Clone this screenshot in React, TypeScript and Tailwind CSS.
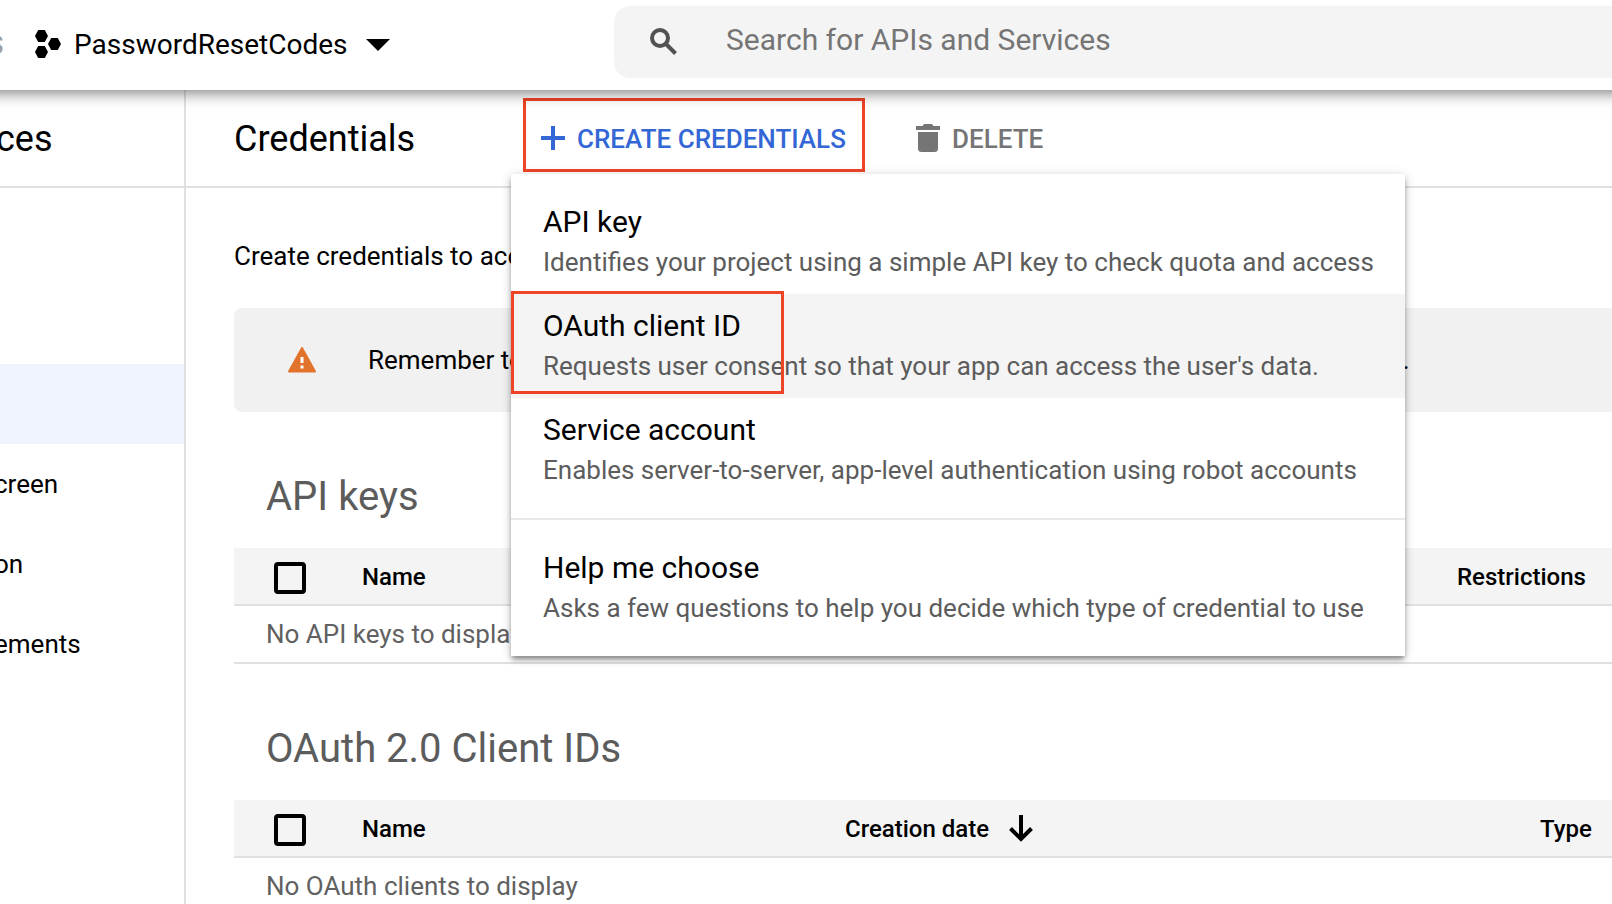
import React from "react";

function ProjectIcon() {
  return (
    <svg className="mb-[3px]" width="26" height="28" viewBox="0 0 26 28" aria-hidden="true">
      <path d="M3.200 0h6.600L13 6l-3.200 6H3.200L0 6z" />
      <path d="M3.200 16h6.600l3.200 6-3.200 6H3.200L0 22z" />
      <path d="M16.200 8h6.600l3.200 6-3.200 6h-6.600L13 14z" />
    </svg>
  );
}

function SearchIcon() {
  return (
    <svg width="28" height="28" viewBox="0 0 28 28" fill="none" stroke="#525252" aria-hidden="true">
      <circle cx="10" cy="10" r="8" strokeWidth="4" />
      <path d="M16 16l9.500 9.500" strokeWidth="4" />
    </svg>
  );
}

function PlusIcon() {
  return (
    <svg width="24" height="24" viewBox="0 0 24 24" stroke="currentColor" strokeWidth="4" aria-hidden="true">
      <path d="M12 0v24M0 12h24" />
    </svg>
  );
}

function TrashIcon() {
  return (
    <svg width="24" height="28" viewBox="0 0 24 28" fill="currentColor" aria-hidden="true">
      <path d="M0 2h6.500l1.500-2h8l1.500 2H24v4H0z" />
      <path d="M2 8h20v16.500a3.500 3.500 0 0 1-3.500 3.500h-13A3.500 3.500 0 0 1 2 24.500z" />
    </svg>
  );
}

function ArrowDownIcon() {
  return (
    <svg width="24" height="28" viewBox="0 0 24 28" fill="none" stroke="#000" strokeWidth="4" aria-hidden="true">
      <path d="M12 0v24M1.500 13.500L12 24l10.500-10.500" />
    </svg>
  );
}

function WarningIcon() {
  return (
    <svg width="30" height="28" viewBox="0 0 30 28" aria-hidden="true">
      <path d="M15 2L28 25.500H2z" fill="#e2732d" stroke="#e2732d" strokeWidth="2" strokeLinejoin="round" />
      <path d="M13.500 11h3v6h-3zM13.500 19.500h3v3h-3z" fill="#fff" />
    </svg>
  );
}

type MenuItemProps = { title: string; text: string; active?: boolean; marked?: boolean };

function MenuItem({ title, text, active, marked }: MenuItemProps) {
  return (
    <button
      type="button"
      role="menuitem"
      className={
        "relative block w-full px-8 py-3 text-left whitespace-nowrap " + (active ? "bg-[#f4f4f4]" : "bg-white")
      }
    >
      <span className="block text-[30px] leading-10 text-black">{title}</span>
      <span className="block text-[26px] leading-10 text-[#5c5c5c]">{text}</span>
      {marked && <span className="absolute -top-[3px] left-0 h-[103px] w-[273px] border-3 border-[#ee4427]" />}
    </button>
  );
}

function SelectAll({ label }: { label: string }) {
  return (
    <input
      type="checkbox"
      aria-label={label}
      className="mt-1 block size-8 appearance-none rounded-sm border-4 border-black"
    />
  );
}

const th = "p-0 pt-0.5 text-left text-[24px] font-medium text-black";
const headRow = "h-[57px] border-b-2 border-[#e0e0e0] bg-[#f4f4f4]";
const bodyRow = "h-[58px] border-b-2 border-[#e0e0e0]";
const sectionTitle = "mt-[57px] pl-8 text-[40px] leading-14 text-[#5c5c5c]";
const table = "mt-[23px] w-full table-fixed border-collapse";

function App() {
  return (
    <div className="flex h-screen flex-col overflow-hidden bg-white font-[Roboto,sans-serif] text-black">
      <header className="relative z-10 -mx-5 flex h-[90px] shrink-0 items-start bg-white px-5 shadow-[0_0_14px_3px_rgba(0,0,0,0.5)]">
        <div className="flex h-[90px] w-[614px] shrink-0 items-center">
          <span className="-ml-3 w-4 text-[26px] text-[#9e9e9e]">S</span>
          <button type="button" className="ml-[31px] flex items-center">
            <ProjectIcon />
            <span className="ml-[13px] text-[28px]">PasswordResetCodes</span>
            <svg className="ml-[18px]" width="24" height="12" viewBox="0 0 24 12" aria-hidden="true">
              <path d="M0 0h24L12 12z" />
            </svg>
          </button>
        </div>
        <label className="mt-1.5 -mr-5 flex h-[72px] flex-1 items-center rounded-l-2xl bg-[#f4f4f4] pl-9">
          <SearchIcon />
          <input
            type="text"
            aria-label="Search"
            placeholder="Search for APIs and Services"
            className="mb-1.5 ml-12 flex-1 bg-transparent text-[30px] outline-none placeholder:text-[#757575]"
          />
        </label>
      </header>

      <div className="flex flex-1">
        <aside className="w-[186px] shrink-0 overflow-hidden border-r-2 border-[#e0e0e0]">
          <div className="h-[98px] border-b-2 border-[#e0e0e0] pt-[25px]">
            <h2 className="-ml-1 text-[36px] leading-12">ces</h2>
          </div>
          <nav className="mt-44 text-[26px] leading-20">
            <a href="#credentials" aria-label="Credentials" className="block h-20 bg-[#eff4fe]" />
            <a href="#consent" className="-ml-1.5 block">creen</a>
            <a href="#domain" className="-ml-1.5 block">on</a>
            <a href="#usage" className="-ml-1.5 block">ements</a>
          </nav>
        </aside>

        <main className="min-w-0 flex-1">
          <div className="relative flex h-[98px] border-b-2 border-[#e0e0e0] pl-12">
            <h1 className="w-[289px] pt-[25px] text-[36px] leading-12">Credentials</h1>
            <button
              type="button"
              className="mt-2 flex h-[74px] w-[342px] items-center border-3 border-[#ee4427] pt-1.5 pl-[15px] text-[26px] font-medium whitespace-nowrap text-[#3367d6]"
            >
              <PlusIcon />
              <span className="mt-0.5 ml-3">CREATE CREDENTIALS</span>
            </button>
            <button
              type="button"
              className="mt-2 ml-[51px] flex h-[74px] items-center pt-1.5 text-[26px] font-medium text-[#757575]"
            >
              <TrashIcon />
              <span className="mt-0.5 ml-3">DELETE</span>
            </button>

            <div
              role="menu"
              className="absolute top-[84px] left-[325px] z-10 w-[894px] bg-white py-4 shadow-[0_4px_5px_-1px_rgba(0,0,0,0.4),0_2px_10px_rgba(0,0,0,0.2)]"
            >
              <MenuItem title="API key" text="Identifies your project using a simple API key to check quota and access" />
              <MenuItem
                title="OAuth client ID"
                text="Requests user consent so that your app can access the user's data."
                active
                marked
              />
              <MenuItem
                title="Service account"
                text="Enables server-to-server, app-level authentication using robot accounts"
              />
              <hr className="my-4 border-t-2 border-[#e8e8e8]" />
              <MenuItem
                title="Help me choose"
                text="Asks a few questions to help you decide which type of credential to use"
              />
            </div>
          </div>

          <div className="pl-12">
            <p className="pt-12 text-[26px] leading-10 whitespace-nowrap">
              Create credentials to access your enabled APIs.
            </p>
            <div className="mt-8 -mr-2 flex h-[104px] items-center rounded-lg bg-[#f1f1f1] pl-[53px] text-[26px] whitespace-nowrap">
              <WarningIcon />
              <p className="ml-[51px]">
                Remember to configure the OAuth consent screen with information about your application.
              </p>
            </div>

            <section>
              <h2 className={sectionTitle}>API keys</h2>
              <table className={table}>
                <thead>
                  <tr className={headRow}>
                    <th className="w-32 p-0 pl-10"><SelectAll label="Select all API keys" /></th>
                    <th className={th}>Name</th>
                    <th className={th + " w-[155px]"}>Restrictions</th>
                  </tr>
                </thead>
                <tbody>
                  <tr className={bodyRow}>
                    <td colSpan={3} className="p-0 pl-8 text-[26px] text-[#616161]">No API keys to display</td>
                  </tr>
                </tbody>
              </table>
            </section>

            <section>
              <h2 className={sectionTitle}>OAuth 2.0 Client IDs</h2>
              <table className={table}>
                <thead>
                  <tr className={headRow}>
                    <th className="w-32 p-0 pl-10"><SelectAll label="Select all OAuth clients" /></th>
                    <th className={th + " w-[483px]"}>Name</th>
                    <th className={th}>
                      <span className="flex items-center gap-5">
                        Creation date
                        <ArrowDownIcon />
                      </span>
                    </th>
                    <th className={th + " w-[72px]"}>Type</th>
                  </tr>
                </thead>
                <tbody>
                  <tr className={bodyRow}>
                    <td colSpan={4} className="p-0 pl-8 text-[26px] text-[#616161]">No OAuth clients to display</td>
                  </tr>
                </tbody>
              </table>
            </section>
          </div>
        </main>
      </div>
    </div>
  );
}

export default App;
